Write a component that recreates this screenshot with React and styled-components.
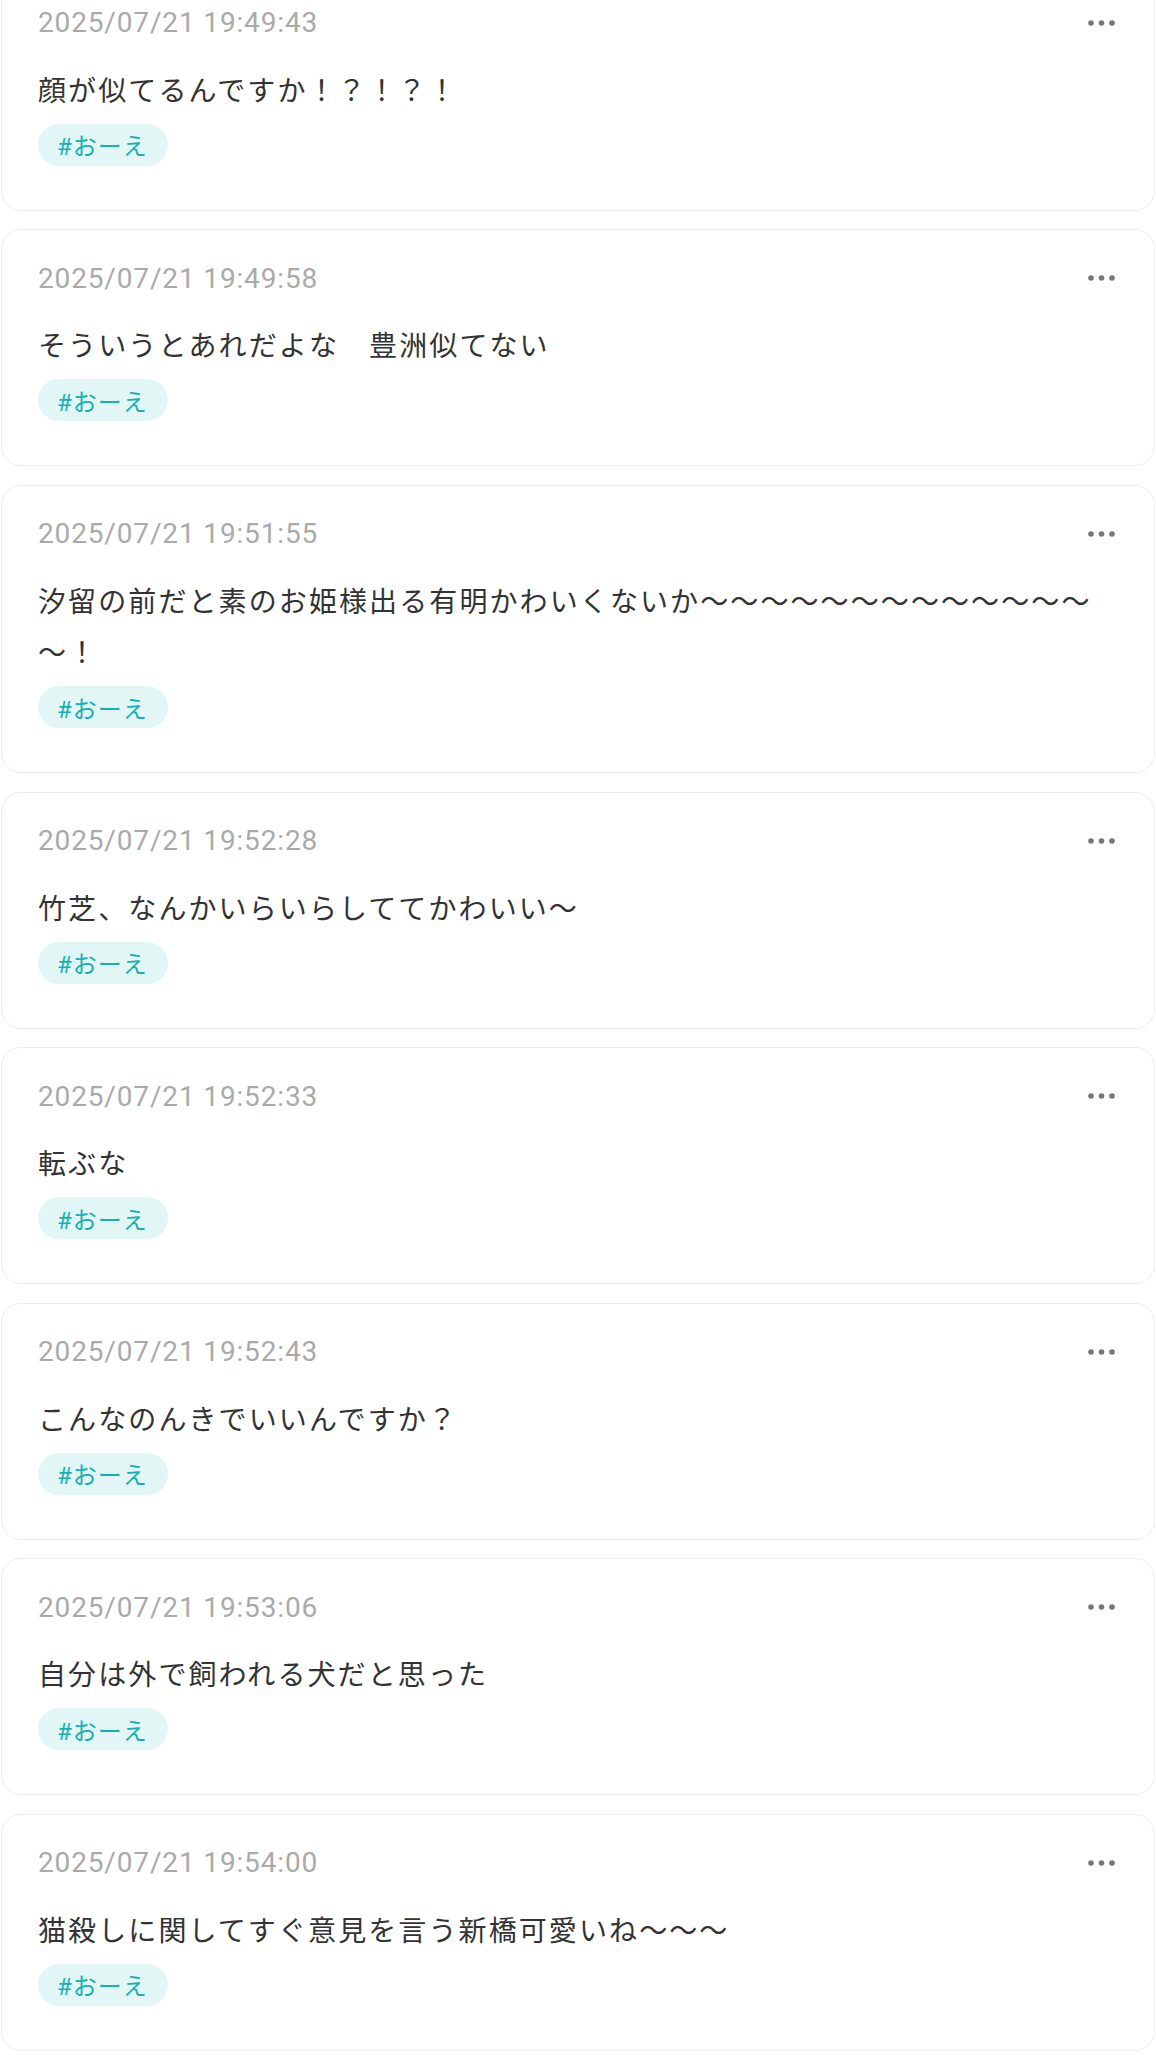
import React from "react";
import styled, { createGlobalStyle } from "styled-components";

const POSTS = [
  { time: "2025/07/21 19:49:43", text: "顔が似てるんですか！？！？！", tag: "おーえ" },
  { time: "2025/07/21 19:49:58", text: "そういうとあれだよな　豊洲似てない", tag: "おーえ" },
  {
    time: "2025/07/21 19:51:55",
    text: "汐留の前だと素のお姫様出る有明かわいくないか～～～～～～～～～～～～～～！",
    tag: "おーえ",
  },
  { time: "2025/07/21 19:52:28", text: "竹芝、なんかいらいらしててかわいい～", tag: "おーえ" },
  { time: "2025/07/21 19:52:33", text: "転ぶな", tag: "おーえ" },
  { time: "2025/07/21 19:52:43", text: "こんなのんきでいいんですか？", tag: "おーえ" },
  { time: "2025/07/21 19:53:06", text: "自分は外で飼われる犬だと思った", tag: "おーえ" },
  { time: "2025/07/21 19:54:00", text: "猫殺しに関してすぐ意見を言う新橋可愛いね～～～", tag: "おーえ" },
];

const GlobalStyle = createGlobalStyle`
  html, body {
    margin: 0;
    padding: 0;
    background: #ffffff;
    font-family: Roboto, "Noto Sans CJK JP", sans-serif;
    overflow: hidden;
  }
`;

// list is scrolled a little, so the first card is cut off at the top
const Feed = styled.ul`
  list-style: none;
  margin: -26.2px 0 0;
  padding: 0 1px;
  display: flex;
  flex-direction: column;
  gap: 18.5px;
`;

const Card = styled.li`
  border: 1px solid #ededed;
  border-radius: 20px;
  background: #fff;
  padding: 26px 38px 44px 36px;
`;

const Header = styled.div`
  height: 44px;
  display: flex;
  align-items: center;
  justify-content: space-between;
`;

const Time = styled.time`
  font-family: Roboto, sans-serif;
  font-size: 28px;
  letter-spacing: 0.85px;
  color: #aaaaaa;
`;

const MoreButton = styled.button`
  border: 0;
  background: none;
  padding: 0;
  margin-right: 1px;
  display: flex;
  cursor: pointer;
`;

const Body = styled.p`
  margin: 19px 0 0;
  font-family: "Noto Sans CJK JP", sans-serif;
  font-size: 28px;
  line-height: 51.5px;
  letter-spacing: 2.1px;
  color: #333;
  word-break: break-all;
`;

const Tags = styled.div`
  margin-top: 8.5px;
  display: flex;
  gap: 10px;
`;

const Tag = styled.span`
  height: 42px;
  padding: 0 20px 0 19px;
  border-radius: 21px;
  background: #e3f6f6;
  color: #15b1b1;
  font-family: Roboto, "Noto Sans CJK JP", sans-serif;
  font-size: 24px;
  letter-spacing: 1px;
  display: inline-flex;
  align-items: center;
`;

const Dots = () => (
  <svg width="27" height="6" viewBox="0 0 27 6">
    <circle cx="3" cy="3" r="2.8" fill="#777" />
    <circle cx="13.5" cy="3" r="2.8" fill="#777" />
    <circle cx="24" cy="3" r="2.8" fill="#777" />
  </svg>
);

export default function App() {
  return (
    <>
      <GlobalStyle />
      <Feed>
        {POSTS.map((p) => (
          <Card key={p.time}>
            <Header>
              <Time>{p.time}</Time>
              <MoreButton aria-label="more">
                <Dots />
              </MoreButton>
            </Header>
            <Body>{p.text}</Body>
            <Tags>
              <Tag>#{p.tag}</Tag>
            </Tags>
          </Card>
        ))}
      </Feed>
    </>
  );
}
